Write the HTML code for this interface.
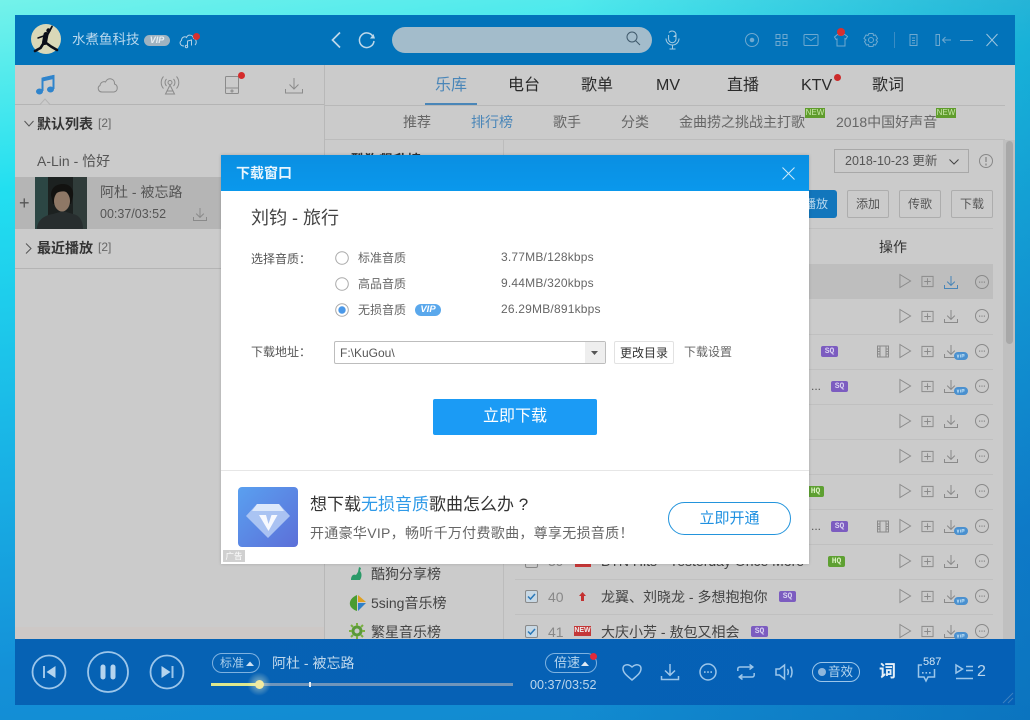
<!DOCTYPE html>
<html><head><meta charset="utf-8"><style>
*{box-sizing:border-box}
html,body{margin:0;padding:0;width:1030px;height:720px;overflow:hidden}
body{position:relative;font-family:"Liberation Sans","Noto Sans CJK SC",sans-serif;background:linear-gradient(90deg,rgba(0,70,160,0) 55%,rgba(0,70,160,.3) 100%),linear-gradient(172deg,#74f2ea 0%,#22dff0 22%,#19b4e6 52%,#1490d8 78%,#1088cc 100%)}
.t{position:absolute;white-space:nowrap;line-height:20px;height:20px}
.a{position:absolute}
svg{position:absolute;overflow:visible}
.bd{position:absolute;height:11px;border-radius:2px;font:bold 8px/11px "Liberation Mono",monospace;color:#d8d0f0;text-align:center;letter-spacing:0}
.sq{background:#7c5cc0;width:17px}
.hq{background:#5ea032;width:17px;color:#d8f0c0}
.rl{position:absolute;left:515px;width:478px;height:1px;background:#c0c0c0}
.btn{position:absolute;top:190px;width:42px;height:28px;border:1px solid #adadad;border-radius:2px;text-align:center;font-size:12px;line-height:26px;color:#555}
.n{position:absolute;width:20px;height:10px;background:#5f9c2c;color:#c8e8a8;font:8px/10px "Liberation Sans";text-align:center}
</style></head><body>
<svg width="0" height="0" style="position:absolute">
<defs>
<symbol id="play" viewBox="0 0 14 16" overflow="visible"><path d="M1 1 L12.5 8 L1 15Z" fill="none" stroke="#8a8a8a" stroke-width="1"/></symbol>
<symbol id="add" viewBox="0 0 14 14" overflow="visible"><path d="M1 1.5h12v11H1zM7 3.500v7M3.500 7h7" fill="none" stroke="#8a8a8a" stroke-width="1"/></symbol>
<symbol id="dl" viewBox="0 0 14 15" overflow="visible"><path d="M7 1v9M3.200 6.600L7 10.400l3.800-3.800M.5 10v3.500h13V10" fill="none" stroke="#8a8a8a" stroke-width="1"/></symbol>
<symbol id="more" viewBox="0 0 14 14" overflow="visible"><circle cx="7" cy="7" r="6.500" fill="none" stroke="#8a8a8a"/><path d="M4 6.500h1.200v1.200H4zM6.400 6.500h1.200v1.200H6.400zM8.800 6.500H10v1.200H8.800z" fill="#8a8a8a"/></symbol>
<symbol id="film" viewBox="0 0 12 12" overflow="visible"><path d="M.5.500h11v11H.5zM3 .5v11M9 .5v11M.5 3.500H3M.5 6H3M.5 8.500H3M9 3.500h2.500M9 6h2.500M9 8.500h2.500" fill="none" stroke="#8a8a8a"/></symbol>
<symbol id="vipb" viewBox="0 0 14 8" overflow="visible"><rect width="14" height="8" rx="4" fill="#4a90cf"/><path d="M3 2.500l1 3 1-3M6.500 2.500v3M8 5.500v-3h2v1.500H8" fill="none" stroke="#bfe0f5" stroke-width=".8"/></symbol>
</defs>
</svg>

<!-- window -->
<div class="a" style="left:15px;top:15px;width:1000px;height:690px;background:#cbcbcb"></div>
<div class="a" style="left:15px;top:15px;width:1000px;height:50px;background:#0273ba"></div>

<!-- header left -->
<svg style="left:31px;top:24px" width="30" height="30" viewBox="0 0 30 30"><circle cx="15" cy="15" r="15" fill="#d9d8b8"/><g fill="none" stroke="#0b0e18" stroke-linecap="round" stroke-linejoin="round"><path d="M16.500 11L21 2.500" stroke-width="1.800"/><path d="M15 10.500L13.500 18.500" stroke-width="5"/><path d="M14 11.500L7 14" stroke-width="1.500"/><path d="M13 18.500L9.500 24 4 27" stroke-width="2.600"/><path d="M14.500 18.500L20 22.500 26 26" stroke-width="2.600"/></g><circle cx="17.500" cy="6.500" r="2.200" fill="#0b0e18"/></svg>
<div class="t" style="left:72px;top:30px;font-size:13.500px;color:#b9d8ee">水煮鱼科技</div>
<div class="a" style="left:144px;top:35px;width:26px;height:11px;border-radius:6px;background:#9fb3c1;color:#e6eef3;font:italic bold 9px/11px 'Liberation Sans';text-align:center">VIP</div>
<svg style="left:179px;top:32px" width="20" height="16" viewBox="0 0 20 16"><path d="M5 14C1 14 0 10 2.500 8.500 2.500 5 6 4 7.500 5.500 9 2 14 2.500 14.500 6.500 17.500 7 18 11 16 13" fill="none" stroke="#b4d0e4"/><path d="M8.500 15V9l4-1v5.500" fill="none" stroke="#b4d0e4"/><circle cx="7.500" cy="14.500" r="1.200" fill="none" stroke="#b4d0e4"/></svg>
<div class="a" style="left:193px;top:33px;width:7px;height:7px;border-radius:50%;background:#d83030"></div>

<svg style="left:330px;top:31px" width="12" height="18"><path d="M10 1.500L2.500 9l7.500 7.500" fill="none" stroke="#bed8ea" stroke-width="1.700"/></svg>
<svg style="left:358px;top:31px" width="18" height="18" viewBox="0 0 18 18"><path d="M15.500 6.500A7.300 7.300 0 1 0 16 10" fill="none" stroke="#bed8ea" stroke-width="1.500"/><path d="M12 7.500h5l-1.500-4.500z" fill="#bed8ea"/></svg>
<div class="a" style="left:392px;top:27px;width:260px;height:26px;border-radius:13px;background:#a3bccb"></div>
<svg style="left:626px;top:31px" width="15" height="15"><circle cx="6" cy="6" r="5" fill="none" stroke="#405a6c"/><path d="M9.600 9.600l4.400 4.400" stroke="#405a6c"/></svg>
<svg style="left:665px;top:30px" width="15" height="20" viewBox="0 0 15 20"><path d="M4 2.500a4 4 0 0 1 7 1.500v5a3.700 3.700 0 0 1-7.400 0V5M1 8.500a6.500 6.500 0 0 0 13 0M7.500 15v4M4.500 19h6" fill="none" stroke="#a8cce2"/><path d="M8 7l3-3 0 3z" fill="#a8cce2"/></svg>
<svg style="left:745px;top:30px" width="250" height="20" viewBox="0 0 250 20" fill="none" stroke="#6fa9d0">
<circle cx="7" cy="10" r="6.500"/><circle cx="7" cy="10" r="1.800" fill="#6fa9d0"/>
<path d="M31 4.500h4v4h-4zM38 4.500h4v4h-4zM31 11.500h4v4h-4zM38 11.500h4v4h-4z"/>
<path d="M60 4.500h12a1 1 0 0 1 1 1v9a1 1 0 0 1-1 1H60a1 1 0 0 1-1-1v-9a1 1 0 0 1 1-1zM61 7l5 3.500L71 7"/>
<path d="M93 4l-3.500 3 1.500 2.500 1-.5v7h8V8.500l1 .5 1.500-2.500L99 4c-.5 2-5.500 2-6 0z"/>
<circle cx="126" cy="10" r="2.500"/><path d="M124 3.500h4l.5 2 2-.5 2 3.500-1.500 1.500 1.500 1.500-2 3.500-2-.5-.5 2h-4l-.5-2-2 .5-2-3.500 1.500-1.500L119 8.500l2-3.500 2 .5z"/>
<path d="M149.500 2v16" stroke="#3a8cc4"/>
<path d="M165 4.500h7v11h-7zM167 8h3M167 10.500h3M167 13h3"/>
<path d="M191 4.500h3.500v11H191zM206 10h-8.500M200.500 7L197.500 10l3 3"/>
<path d="M215 10.500h13"/>
<path d="M241.500 4l11 12M252.500 4l-11 12" stroke="#9cc4de"/>
</svg>
<div class="a" style="left:837px;top:28px;width:8px;height:8px;border-radius:50%;background:#d83030"></div>

<!-- sidebar -->
<div class="a" style="left:324px;top:65px;width:1px;height:574px;background:#b8b8b8"></div>
<div class="a" style="left:15px;top:104px;width:309px;height:1px;background:#b4b4b4"></div>
<div class="a" style="left:15px;top:627px;width:309px;height:12px;background:#cdc8c6"></div>
<svg style="left:35px;top:74px" width="22" height="22" viewBox="0 0 22 22"><path d="M7.500 17V4.500l11-2.500V15" fill="none" stroke="#2f84cc" stroke-width="2"/><path d="M7.500 3.500l11-2.500v4l-11 2.500z" fill="#2f84cc"/><ellipse cx="4.500" cy="17.500" rx="3.500" ry="3" fill="#2f84cc"/><ellipse cx="15.500" cy="15.500" rx="3.500" ry="3" fill="#2f84cc"/></svg>
<svg style="left:97px;top:77px" width="22" height="16" viewBox="0 0 22 16"><path d="M5 15C1 15 0 10 3 8.500 3.500 5 7 4 8.500 5 10.500 0 18 1 17.500 7c3.500 1 4 7-.5 8z" fill="none" stroke="#8b8b8b"/></svg>
<svg style="left:159px;top:75px" width="22" height="20" viewBox="0 0 22 20" fill="none" stroke="#8b8b8b"><circle cx="11" cy="7.500" r="2"/><path d="M7.500 4a5 5 0 0 0 0 7M14.500 4a5 5 0 0 1 0 7M4.500 1.500a9 9 0 0 0 0 12M17.500 1.500a9 9 0 0 1 0 12M11 10l-4.500 9h9zM8 16h6"/></svg>
<svg style="left:225px;top:76px" width="14" height="18" viewBox="0 0 14 18" fill="none" stroke="#8b8b8b"><rect x=".5" y=".5" width="13" height="17" rx="1"/><path d="M.5 12h13"/><circle cx="7" cy="15" r="1"/></svg>
<div class="a" style="left:238px;top:72px;width:7px;height:7px;border-radius:50%;background:#d42a2a"></div>
<svg style="left:285px;top:77px" width="18" height="17" viewBox="0 0 18 17" fill="none" stroke="#8b8b8b"><path d="M9 1v11M4.500 7.500L9 12l4.500-4.500M.5 12v4h17v-4"/></svg>
<svg style="left:40px;top:98px" width="10" height="7"><path d="M0 6.500L5 1l5 5.500" fill="#cbcbcb" stroke="#b4b4b4"/></svg>

<svg style="left:24px;top:120px" width="10" height="7"><path d="M.5 1l4.500 5L9.500 1" fill="none" stroke="#555"/></svg>
<div class="t" style="left:37px;top:114px;font-size:14px;font-weight:bold;color:#333">默认列表</div>
<div class="t" style="left:98px;top:113px;font-size:12px;color:#666">[2]</div>
<div class="t" style="left:37px;top:151px;font-size:14px;color:#555">A-Lin - 恰好</div>
<div class="a" style="left:15px;top:177px;width:206px;height:52px;background:#b5b5b5"></div>
<div class="t" style="left:19px;top:193px;font-size:18px;color:#555">+</div>
<svg style="left:35px;top:177px" width="52" height="52" viewBox="0 0 52 52"><rect width="52" height="52" fill="#1c2120"/><rect width="13" height="52" fill="#2c4644"/><rect x="38" width="14" height="52" fill="#303c3a"/><path d="M2 52c0-9 8-14 16-15l10-3 10 3c6 1 10 6 10 15z" fill="#272d2e"/><path d="M16 18c0-8 6-11 12-11s11 4 10 12l-2 8H18z" fill="#121210"/><ellipse cx="27" cy="24" rx="8" ry="10.500" fill="#8e7866"/><path d="M18 20c2-6 14-8 17-2l1-6-8-3-8 2z" fill="#121210"/></svg>
<div class="t" style="left:100px;top:182px;font-size:14px;color:#555">阿杜 - 被忘路</div>
<div class="t" style="left:100px;top:204px;font-size:12.500px;color:#555">00:37/03:52</div>
<svg style="left:193px;top:207px" width="14" height="15"><use href="#dl" width="14" height="15"/></svg>
<svg style="left:25px;top:243px" width="7" height="11"><path d="M1 .5l5 5-5 5" fill="none" stroke="#555"/></svg>
<div class="t" style="left:37px;top:238px;font-size:14px;font-weight:bold;color:#333">最近播放</div>
<div class="t" style="left:98px;top:237px;font-size:12px;color:#666">[2]</div>
<div class="a" style="left:15px;top:268px;width:309px;height:1px;background:#b4b4b4"></div>

<!-- main tabs -->
<div class="a" style="left:325px;top:105px;width:680px;height:1px;background:#b8b8b8"></div>
<div class="a" style="left:425px;top:103px;width:52px;height:2px;background:#4a86b8"></div>
<div class="t" style="left:435px;top:76px;font-size:16px;color:#4a86b8">乐库</div>
<div class="t" style="left:508px;top:76px;font-size:16px;color:#2a2a2a">电台</div>
<div class="t" style="left:581px;top:76px;font-size:16px;color:#2a2a2a">歌单</div>
<div class="t" style="left:656px;top:76px;font-size:16px;color:#2a2a2a">MV</div>
<div class="t" style="left:727px;top:76px;font-size:16px;color:#2a2a2a">直播</div>
<div class="t" style="left:801px;top:76px;font-size:16px;color:#2a2a2a">KTV</div>
<div class="a" style="left:834px;top:74px;width:7px;height:7px;border-radius:50%;background:#cc2a2a"></div>
<div class="t" style="left:872px;top:76px;font-size:16px;color:#2a2a2a">歌词</div>

<div class="t" style="left:403px;top:112px;font-size:14px;color:#666">推荐</div>
<div class="t" style="left:471px;top:112px;font-size:14px;color:#4a86b8">排行榜</div>
<div class="t" style="left:553px;top:112px;font-size:14px;color:#666">歌手</div>
<div class="t" style="left:621px;top:112px;font-size:14px;color:#666">分类</div>
<div class="t" style="left:679px;top:112px;font-size:14px;color:#666">金曲捞之挑战主打歌</div>
<div class="n" style="left:805px;top:108px">NEW</div>
<div class="t" style="left:836px;top:112px;font-size:14px;color:#666">2018中国好声音</div>
<div class="n" style="left:936px;top:108px">NEW</div>
<div class="a" style="left:325px;top:139px;width:680px;height:1px;background:#bcbcbc"></div>

<!-- scrollbar -->
<div class="a" style="left:1003px;top:140px;width:12px;height:499px;background:#c0c0c0"></div>
<div class="a" style="left:1006px;top:141px;width:7px;height:203px;border-radius:4px;background:#a8a8a8"></div>

<!-- heading peeking -->
<div class="t" style="left:351px;top:150px;font-size:14px;font-weight:bold;color:#333">酷狗飙升榜</div>
<div class="t" style="left:505px;top:151px;font-size:14px;color:#333">[</div>

<div class="a" style="left:834px;top:149px;width:135px;height:24px;border:1px solid #a8a8a8"></div>
<div class="t" style="left:845px;top:151px;font-size:12.500px;color:#555">2018-10-23 更新</div>
<svg style="left:949px;top:159px" width="10" height="6"><path d="M.5.500L5 5 9.500.500" fill="none" stroke="#444"/></svg>
<svg style="left:979px;top:154px" width="14" height="14"><circle cx="7" cy="7" r="6.500" fill="none" stroke="#888"/><path d="M7 3v5M7 9.500v2" stroke="#888" stroke-width="1.300"/></svg>

<div class="a" style="left:790px;top:190px;width:47px;height:28px;background:#1276bc;border-radius:3px"></div>
<div class="t" style="left:804px;top:194px;font-size:12px;color:#b8d8ee">播放</div>
<div class="btn" style="left:847px">添加</div>
<div class="btn" style="left:899px">传歌</div>
<div class="btn" style="left:951px">下载</div>
<div class="a" style="left:515px;top:228px;width:478px;height:1px;background:#c0c0c0"></div>
<div class="t" style="left:879px;top:237px;font-size:14px;color:#333">操作</div>

<!-- rows -->
<div class="a" style="left:515px;top:264px;width:478px;height:35px;background:#bebebe"></div>
<div class="rl" style="top:334px"></div><div class="rl" style="top:369px"></div><div class="rl" style="top:404px"></div><div class="rl" style="top:439px"></div><div class="rl" style="top:474px"></div><div class="rl" style="top:509px"></div><div class="rl" style="top:544px"></div><div class="rl" style="top:579px"></div><div class="rl" style="top:614px"></div>
<svg style="left:899px;top:273px" width="13" height="16"><use href="#play" width="13" height="16"/></svg><svg style="left:921px;top:275px" width="13" height="13"><use href="#add" width="13" height="13"/></svg><svg style="left:944px;top:275px" width="14" height="15" viewBox="0 0 14 15"><path d="M7 1v9M3.200 6.600L7 10.400l3.800-3.800M.5 10v3.500h13V10" fill="none" stroke="#4a86b8"/></svg><svg style="left:975px;top:275px" width="14" height="14"><use href="#more" width="14" height="14"/></svg>
<svg style="left:899px;top:308px" width="13" height="16"><use href="#play" width="13" height="16"/></svg><svg style="left:921px;top:310px" width="13" height="13"><use href="#add" width="13" height="13"/></svg><svg style="left:944px;top:309px" width="14" height="15"><use href="#dl" width="14" height="15"/></svg><svg style="left:975px;top:309px" width="14" height="14"><use href="#more" width="14" height="14"/></svg>
<div class="bd sq" style="left:821px;top:346px">SQ</div>
<svg style="left:877px;top:345px" width="12" height="13"><use href="#film" width="12" height="13"/></svg><svg style="left:899px;top:343px" width="13" height="16"><use href="#play" width="13" height="16"/></svg><svg style="left:921px;top:345px" width="13" height="13"><use href="#add" width="13" height="13"/></svg><svg style="left:944px;top:344px" width="14" height="15"><use href="#dl" width="14" height="15"/></svg><svg style="left:954px;top:352px" width="14" height="8"><use href="#vipb" width="14" height="8"/></svg><svg style="left:975px;top:344px" width="14" height="14"><use href="#more" width="14" height="14"/></svg>
<div class="t" style="left:811px;top:376px;font-size:12px;color:#555">...</div>
<div class="bd sq" style="left:831px;top:381px">SQ</div>
<svg style="left:899px;top:378px" width="13" height="16"><use href="#play" width="13" height="16"/></svg><svg style="left:921px;top:380px" width="13" height="13"><use href="#add" width="13" height="13"/></svg><svg style="left:944px;top:379px" width="14" height="15"><use href="#dl" width="14" height="15"/></svg><svg style="left:954px;top:387px" width="14" height="8"><use href="#vipb" width="14" height="8"/></svg><svg style="left:975px;top:379px" width="14" height="14"><use href="#more" width="14" height="14"/></svg>
<svg style="left:899px;top:413px" width="13" height="16"><use href="#play" width="13" height="16"/></svg><svg style="left:921px;top:415px" width="13" height="13"><use href="#add" width="13" height="13"/></svg><svg style="left:944px;top:414px" width="14" height="15"><use href="#dl" width="14" height="15"/></svg><svg style="left:975px;top:414px" width="14" height="14"><use href="#more" width="14" height="14"/></svg>
<svg style="left:899px;top:448px" width="13" height="16"><use href="#play" width="13" height="16"/></svg><svg style="left:921px;top:450px" width="13" height="13"><use href="#add" width="13" height="13"/></svg><svg style="left:944px;top:449px" width="14" height="15"><use href="#dl" width="14" height="15"/></svg><svg style="left:975px;top:449px" width="14" height="14"><use href="#more" width="14" height="14"/></svg>
<div class="bd hq" style="left:807px;top:486px">HQ</div>
<svg style="left:899px;top:483px" width="13" height="16"><use href="#play" width="13" height="16"/></svg><svg style="left:921px;top:485px" width="13" height="13"><use href="#add" width="13" height="13"/></svg><svg style="left:944px;top:484px" width="14" height="15"><use href="#dl" width="14" height="15"/></svg><svg style="left:975px;top:484px" width="14" height="14"><use href="#more" width="14" height="14"/></svg>
<div class="t" style="left:811px;top:516px;font-size:12px;color:#555">...</div>
<div class="bd sq" style="left:831px;top:521px">SQ</div>
<svg style="left:877px;top:520px" width="12" height="13"><use href="#film" width="12" height="13"/></svg><svg style="left:899px;top:518px" width="13" height="16"><use href="#play" width="13" height="16"/></svg><svg style="left:921px;top:520px" width="13" height="13"><use href="#add" width="13" height="13"/></svg><svg style="left:944px;top:519px" width="14" height="15"><use href="#dl" width="14" height="15"/></svg><svg style="left:954px;top:527px" width="14" height="8"><use href="#vipb" width="14" height="8"/></svg><svg style="left:975px;top:519px" width="14" height="14"><use href="#more" width="14" height="14"/></svg>
<div class="a" style="left:525px;top:555px;width:13px;height:13px;border:1px solid #888;border-radius:2px"></div>
<div class="t" style="left:548px;top:551px;font-size:14px;color:#888">39</div>
<div class="a" style="left:575px;top:556px;width:16px;height:11px;background:#c83838"></div>
<div class="t" style="left:601px;top:551px;font-size:14px;color:#444">BTN Hits - Yesterday Once More</div>
<div class="bd hq" style="left:828px;top:556px">HQ</div>
<svg style="left:899px;top:553px" width="13" height="16"><use href="#play" width="13" height="16"/></svg><svg style="left:921px;top:555px" width="13" height="13"><use href="#add" width="13" height="13"/></svg><svg style="left:944px;top:554px" width="14" height="15"><use href="#dl" width="14" height="15"/></svg><svg style="left:975px;top:554px" width="14" height="14"><use href="#more" width="14" height="14"/></svg>

<svg style="left:525px;top:590px" width="13" height="13"><rect x=".5" y=".5" width="12" height="12" rx="1.500" fill="#c8d8e4" stroke="#8a8a8a"/><path d="M3 6.500l2.500 2.500L10 4" fill="none" stroke="#2a78b8" stroke-width="1.500"/></svg>
<div class="t" style="left:548px;top:587px;font-size:14px;color:#888">40</div>
<svg style="left:578px;top:591px" width="9" height="11"><path d="M4.500 1L8 5H6v5H3V5H1z" fill="#c43030"/></svg>
<div class="t" style="left:601px;top:587px;font-size:14px;color:#444">龙翼、刘晓龙 - 多想抱抱你</div>
<div class="bd sq" style="left:779px;top:591px">SQ</div>
<svg style="left:899px;top:588px" width="13" height="16"><use href="#play" width="13" height="16"/></svg><svg style="left:921px;top:590px" width="13" height="13"><use href="#add" width="13" height="13"/></svg><svg style="left:944px;top:589px" width="14" height="15"><use href="#dl" width="14" height="15"/></svg><svg style="left:954px;top:597px" width="14" height="8"><use href="#vipb" width="14" height="8"/></svg><svg style="left:975px;top:589px" width="14" height="14"><use href="#more" width="14" height="14"/></svg>

<svg style="left:525px;top:625px" width="13" height="13"><rect x=".5" y=".5" width="12" height="12" rx="1.500" fill="#c8d8e4" stroke="#8a8a8a"/><path d="M3 6.500l2.500 2.500L10 4" fill="none" stroke="#2a78b8" stroke-width="1.500"/></svg>
<div class="t" style="left:548px;top:622px;font-size:14px;color:#888">41</div>
<div class="a" style="left:574px;top:626px;width:17px;height:10px;background:#c43838;color:#eee;font:bold 7px/10px 'Liberation Sans';text-align:center">NEW</div>
<div class="t" style="left:601px;top:622px;font-size:14px;color:#444">大庆小芳 - 敖包又相会</div>
<div class="bd sq" style="left:751px;top:626px">SQ</div>
<svg style="left:899px;top:623px" width="13" height="16"><use href="#play" width="13" height="16"/></svg><svg style="left:921px;top:625px" width="13" height="13"><use href="#add" width="13" height="13"/></svg><svg style="left:944px;top:624px" width="14" height="15"><use href="#dl" width="14" height="15"/></svg><svg style="left:954px;top:632px" width="14" height="8"><use href="#vipb" width="14" height="8"/></svg><svg style="left:975px;top:624px" width="14" height="14"><use href="#more" width="14" height="14"/></svg>

<!-- chart categories -->
<div class="a" style="left:503px;top:140px;width:1px;height:499px;background:#bcbcbc"></div>
<svg style="left:350px;top:565px" width="16" height="16"><path d="M1 15c0-5 3-6 5-5l2-3 1-5 2 1-1 3c2 2 2 6 0 9z" fill="#2a9a68"/></svg>
<div class="t" style="left:371px;top:564px;font-size:14px;color:#444">酷狗分享榜</div>
<svg style="left:349px;top:594px" width="18" height="18"><path d="M8 1C3 3 0 7 1 11c1 3 4 5 7 6z" fill="#4a9c30"/><path d="M9 1l8 7H9z" fill="#e0a020"/><path d="M9 9h8l-8 8z" fill="#2f80c8"/></svg>
<div class="t" style="left:371px;top:593px;font-size:14px;color:#444">5sing音乐榜</div>
<svg style="left:349px;top:623px" width="16" height="16"><circle cx="8" cy="8" r="4" fill="none" stroke="#5a9a3a" stroke-width="3"/><path d="M8 0v3M8 13v3M0 8h3M13 8h3M2 2l2 2M12 12l2 2M14 2l-2 2M2 14l2-2" stroke="#7ab040" stroke-width="2"/></svg>
<div class="t" style="left:371px;top:622px;font-size:14px;color:#444">繁星音乐榜</div>

<!-- footer -->
<div class="a" style="left:15px;top:639px;width:1000px;height:66px;background:linear-gradient(90deg,#0662b4,#0560b6)"></div>
<svg style="left:31px;top:651px" width="160" height="42" viewBox="0 0 160 42" fill="none" stroke="#9cc6ea" stroke-width="1.800">
<circle cx="18" cy="21" r="16.500"/><circle cx="77" cy="21" r="20"/><circle cx="136" cy="21" r="16.500"/>
<path d="M13 15v12" stroke-width="2"/><path d="M24.500 15v12L15.500 21z" fill="#b4d4ee" stroke="none"/>
<rect x="69.500" y="13.500" width="5" height="15" rx="2.500" fill="#b4d4ee" stroke="none"/><rect x="79.500" y="13.500" width="5" height="15" rx="2.500" fill="#b4d4ee" stroke="none"/>
<path d="M130.500 15v12l9-6z" fill="#b4d4ee" stroke="none"/><path d="M141.500 15v12" stroke-width="2"/>
</svg>
<div class="a" style="left:212px;top:653px;width:48px;height:20px;border:1px solid #7eb2e0;border-radius:10px"></div>
<div class="t" style="left:220px;top:653px;font-size:12px;color:#a8cdea">标准</div>
<svg style="left:246px;top:661px" width="8" height="5"><path d="M0 5l4-4.500L8 5z" fill="#cfe2f2"/></svg>
<div class="t" style="left:272px;top:653px;font-size:14px;color:#c0d8ec">阿杜 - 被忘路</div>
<div class="a" style="left:211px;top:683px;width:302px;height:3px;background:#6f95bb"></div>
<div class="a" style="left:211px;top:683px;width:48px;height:3px;background:#dde88e"></div>
<div class="a" style="left:309px;top:682px;width:2px;height:5px;background:#e6eef5"></div>
<div class="a" style="left:247px;top:672px;width:24px;height:24px;border-radius:50%;background:radial-gradient(circle,rgba(255,255,210,.55),rgba(255,255,210,0) 70%)"></div>
<div class="a" style="left:255px;top:680px;width:9px;height:9px;border-radius:50%;background:#f2eaa0"></div>

<div class="a" style="left:545px;top:653px;width:52px;height:20px;border:1px solid #7eb2e0;border-radius:10px"></div>
<div class="t" style="left:554px;top:653px;font-size:13px;color:#b4d4ee">倍速</div>
<svg style="left:581px;top:661px" width="8" height="5"><path d="M0 5l4-4.500L8 5z" fill="#dfeaf4"/></svg>
<div class="a" style="left:590px;top:653px;width:7px;height:7px;border-radius:50%;background:#e02a3a"></div>
<div class="t" style="left:530px;top:675px;font-size:12.600px;color:#bcd6ec">00:37/03:52</div>

<svg style="left:622px;top:662px" width="20" height="20" viewBox="0 0 20 20"><path d="M10 18C4 13 1 10.500 1 6.500 1 3 5.500 1 10 5c4.500-4 9-2 9 1.500 0 4-3 6.500-9 11.500z" fill="none" stroke="#9cc6ea" stroke-width="1.500"/></svg>
<svg style="left:661px;top:663px" width="18" height="18" viewBox="0 0 18 18"><path d="M9 1v11M4 7.500L9 12.300l5-4.800M.5 13v3.500h17V13" fill="none" stroke="#9cc6ea" stroke-width="1.500"/></svg>
<svg style="left:699px;top:663px" width="18" height="18"><circle cx="9" cy="9" r="8" fill="none" stroke="#9cc6ea" stroke-width="1.500"/><path d="M5 8.300h1.600v1.600H5zM8.200 8.300h1.600v1.600H8.200zM11.400 8.300H13v1.600h-1.600z" fill="#9cc6ea"/></svg>
<svg style="left:737px;top:664px" width="18" height="16" viewBox="0 0 18 16"><path d="M.8 7V5a2 2 0 0 1 2-2h12.500M12.500.5L15.800 3l-3.300 2.500M17.200 9v2a2 2 0 0 1-2 2H2.700M5.500 10.500L2.200 13l3.300 2.500" fill="none" stroke="#9cc6ea" stroke-width="1.500"/></svg>
<svg style="left:775px;top:664px" width="19" height="16" viewBox="0 0 19 16"><path d="M1 5h3.500L9.500 1v14l-5-4H1zM12.500 5c1 1.800 1 4.200 0 6M15.500 2.500c2 3 2 8 0 11" fill="none" stroke="#9cc6ea" stroke-width="1.500"/></svg>
<div class="a" style="left:812px;top:662px;width:48px;height:20px;border:1px solid #9cc6ea;border-radius:10px"></div>
<div class="a" style="left:818px;top:668px;width:8px;height:8px;border-radius:50%;background:#8eb6dc"></div>
<div class="t" style="left:828px;top:662px;font-size:12.500px;color:#b4d4ee">音效</div>
<div class="t" style="left:879px;top:662px;font-size:17px;font-weight:bold;color:#e6f0f8">词</div>
<svg style="left:917px;top:664px" width="19" height="19" viewBox="0 0 19 19"><path d="M5 1H1.500v12H7l2 4 2-4h6.500V5" fill="none" stroke="#9cc6ea" stroke-width="1.500"/><path d="M5 8h1.600v1.600H5zM8.500 8h1.600v1.600H8.500zM12 8h1.600v1.600H12z" fill="#9cc6ea"/></svg>
<div class="t" style="left:923px;top:652px;font-size:11px;color:#d4e6f4">587</div>
<svg style="left:955px;top:664px" width="19" height="16" viewBox="0 0 19 16"><path d="M1 1v8l6.500-4zM11 2.500h7M11 6.500h7M1 14.500h17" fill="none" stroke="#9cc6ea" stroke-width="1.500"/></svg>
<div class="t" style="left:977px;top:662px;font-size:16px;color:#bcd6ec">2</div>
<svg style="left:1002px;top:692px" width="12" height="12"><path d="M1 11L11 1M6 11l5-5" stroke="#3c80c0"/></svg>

<!-- modal -->
<div class="a" style="left:221px;top:155px;width:588px;height:409px;background:#fff;box-shadow:0 0 3px rgba(0,0,0,.18)"></div>
<div class="a" style="left:221px;top:155px;width:588px;height:36px;background:linear-gradient(180deg,#0a8fe2,#0a98ec)"></div>
<div class="t" style="left:236px;top:163px;font-size:14px;font-weight:bold;color:#e8f5fd">下载窗口</div>
<svg style="left:782px;top:167px" width="13" height="13"><path d="M.5.500l12 12M12.500.500l-12 12" stroke="#cdeafa"/></svg>
<div class="t" style="left:251px;top:208px;font-size:18px;color:#444">刘钧 - 旅行</div>
<div class="t" style="left:251px;top:249px;font-size:12px;color:#555">选择音质：</div>
<svg style="left:335px;top:251px" width="14" height="66"><circle cx="7" cy="7" r="6.300" fill="#fff" stroke="#aaa"/><circle cx="7" cy="33" r="6.300" fill="#fff" stroke="#aaa"/><circle cx="7" cy="59" r="6.300" fill="#fff" stroke="#aaa"/><circle cx="7" cy="59" r="3.700" fill="#4a98e8"/></svg>
<div class="t" style="left:358px;top:248px;font-size:12px;color:#666">标准音质</div>
<div class="t" style="left:358px;top:274px;font-size:12px;color:#666">高品音质</div>
<div class="t" style="left:358px;top:300px;font-size:12px;color:#666">无损音质</div>
<div class="a" style="left:415px;top:304px;width:26px;height:12px;border-radius:6px;background:#5aa8ec;color:#fff;font:italic bold 9.500px/12px 'Liberation Sans';text-align:center">VIP</div>
<div class="t" style="left:501px;top:247px;font-size:12px;letter-spacing:.2px;color:#666">3.77MB/128kbps</div>
<div class="t" style="left:501px;top:273px;font-size:12px;letter-spacing:.2px;color:#666">9.44MB/320kbps</div>
<div class="t" style="left:501px;top:299px;font-size:12px;letter-spacing:.2px;color:#666">26.29MB/891kbps</div>
<div class="t" style="left:251px;top:342px;font-size:12px;color:#555">下载地址：</div>
<div class="a" style="left:334px;top:341px;width:272px;height:23px;border:1px solid #bdbdbd;border-radius:2px"></div>
<div class="a" style="left:585px;top:342px;width:20px;height:21px;background:#eee"></div>
<svg style="left:591px;top:351px" width="8" height="4"><path d="M0 0h7L3.500 4z" fill="#555"/></svg>
<div class="t" style="left:340px;top:343px;font-size:12px;color:#555">F:\KuGou\</div>
<div class="a" style="left:614px;top:341px;width:60px;height:23px;border:1px solid #e2e2e2;border-radius:2px;font-size:12px;line-height:22px;text-align:center;color:#333">更改目录</div>
<div class="t" style="left:684px;top:342px;font-size:12px;color:#666">下载设置</div>
<div class="a" style="left:433px;top:399px;width:164px;height:36px;border-radius:2px;background:#1b9bf5;color:#fff;font-size:16px;line-height:36px;text-align:center">立即下载</div>
<div class="a" style="left:221px;top:470px;width:588px;height:1px;background:#e6e6e6"></div>
<svg style="left:238px;top:487px" width="60" height="60" viewBox="0 0 60 60"><defs><linearGradient id="g" x1="0" y1="0" x2="1" y2="1"><stop offset="0" stop-color="#5aa0f0"/><stop offset="1" stop-color="#5c6fd8"/></linearGradient></defs><rect width="60" height="60" rx="4" fill="url(#g)"/><path d="M19 17h22l11 12-22 22L8 29z" fill="#b9cef5" opacity=".85"/><path d="M19 17h22l5 7H14z" fill="#dce8fb"/><path d="M21 28h7l2.500 9 3-9h6l-9 16z" fill="#fff" opacity=".9"/></svg>
<div class="t" style="left:310px;top:495px;font-size:17px;color:#333">想下载<span style="color:#2f9ae8">无损音质</span>歌曲怎么办&nbsp;?</div>
<div class="t" style="left:310px;top:523px;font-size:14px;letter-spacing:.3px;color:#666">开通豪华VIP，畅听千万付费歌曲，尊享无损音质！</div>
<div class="a" style="left:668px;top:502px;width:123px;height:33px;border:1px solid #2394dc;border-radius:17px;color:#1f90e0;font-size:15px;line-height:31px;text-align:center">立即开通</div>
<div class="a" style="left:223px;top:550px;width:22px;height:12px;background:#d0d0d0;color:#fff;font-size:8.500px;line-height:12px;text-align:center">广告</div>
</body></html>
